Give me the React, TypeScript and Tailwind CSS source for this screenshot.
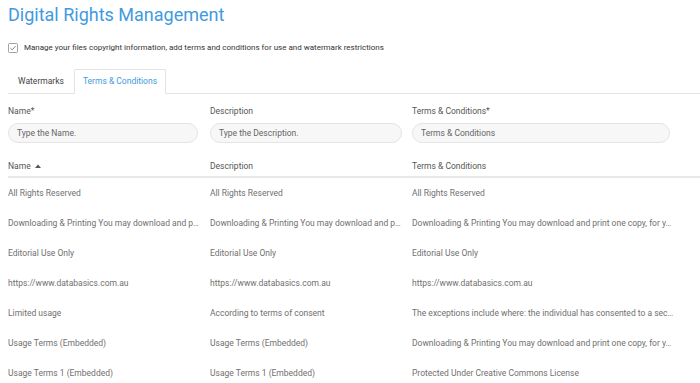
import React from "react";

const rows: [string, string, string][] = [
  ["All Rights Reserved", "All Rights Reserved", "All Rights Reserved"],
  [
    "Downloading & Printing You may download and p…",
    "Downloading & Printing You may download and p…",
    "Downloading & Printing You may download and print one copy, for y…",
  ],
  ["Editorial Use Only", "Editorial Use Only", "Editorial Use Only"],
  ["https://www.databasics.com.au", "https://www.databasics.com.au", "https://www.databasics.com.au"],
  [
    "Limited usage",
    "According to terms of consent",
    "The exceptions include where: the individual has consented to a sec…",
  ],
  [
    "Usage Terms (Embedded)",
    "Usage Terms (Embedded)",
    "Downloading & Printing You may download and print one copy, for y…",
  ],
  ["Usage Terms 1 (Embedded)", "Usage Terms 1 (Embedded)", "Protected Under Creative Commons License"],
];

export default function App() {
  return (
    <div
      className="w-[700px] h-[383px] overflow-hidden bg-white pl-2 text-[#555]"
      style={{ fontFamily: "Roboto, 'Liberation Sans', sans-serif" }}
    >
      <h1 className="pt-[3px] text-[18px] leading-[24px] font-normal text-[#3f9ae0]">
        Digital Rights Management
      </h1>
      <div className="mt-[16px] flex items-center gap-[6px] h-[10px]">
        <svg width="10" height="10" viewBox="0 0 10 10" className="shrink-0">
          <rect x="0.5" y="0.5" width="9" height="9" rx="1" fill="white" stroke="#8a8a8a" strokeWidth="0.8" />
          <path d="M2.4 5.1 L4.2 6.8 L7.6 3.2" fill="none" stroke="#777" strokeWidth="0.9" />
        </svg>
        <span className="text-[8px] leading-[10px] text-[#333] whitespace-nowrap">
          Manage your files copyright information, add terms and conditions for use and watermark restrictions
        </span>
      </div>
      <div className="mt-[16px] flex items-end h-[25px] border-b border-[#e3e3e3]">
        <div className="w-[66px] h-full flex items-center justify-center text-[8.5px] text-[#444]">Watermarks</div>
        <div className="w-[92px] h-[25px] -mb-px flex items-center justify-center text-[8.5px] text-[#3f9ae0] border border-b-white border-[#e3e3e3] rounded-t-[2px] bg-white">
          Terms &amp; Conditions
        </div>
      </div>
      <div className="mt-[11px] flex text-[8.5px] text-[#555]">
        <div className="w-[202px] pr-[12px]">
          <div className="h-[12px] leading-[12px]">Name*</div>
          <div className="mt-[6px] h-[20px] rounded-full border border-[#e4e4e4] bg-[#f7f7f7] flex items-center pl-[8px] text-[#666]">
            Type the Name.
          </div>
        </div>
        <div className="w-[202px] pr-[10px]">
          <div className="h-[12px] leading-[12px]">Description</div>
          <div className="mt-[6px] h-[20px] rounded-full border border-[#e4e4e4] bg-[#f7f7f7] flex items-center pl-[8px] text-[#666]">
            Type the Description.
          </div>
        </div>
        <div className="w-[258px]">
          <div className="h-[12px] leading-[12px]">Terms &amp; Conditions*</div>
          <div className="mt-[6px] h-[20px] rounded-full border border-[#e4e4e4] bg-[#f7f7f7] flex items-center pl-[8px] text-[#666]">
            Terms &amp; Conditions
          </div>
        </div>
      </div>
      <div className="mt-[13px] flex h-[22px] items-center border-b-2 border-[#e8e8e8] text-[8.5px] text-[#555]">
        <div className="w-[202px] flex items-center gap-[4px]">
          Name
          <svg width="6" height="4" viewBox="0 0 6 4">
            <path d="M0 4 L3 0.5 L6 4 Z" fill="#555" />
          </svg>
        </div>
        <div className="w-[202px]">Description</div>
        <div className="w-[258px]">Terms &amp; Conditions</div>
      </div>
      <div>
        {rows.map((r, i) => (
          <div key={i} className="flex h-[30px] items-center text-[8.5px] text-[#707070] whitespace-nowrap">
            <div className="w-[202px]">{r[0]}</div>
            <div className="w-[202px]">{r[1]}</div>
            <div className="w-[268px]">{r[2]}</div>
          </div>
        ))}
      </div>
    </div>
  );
}
